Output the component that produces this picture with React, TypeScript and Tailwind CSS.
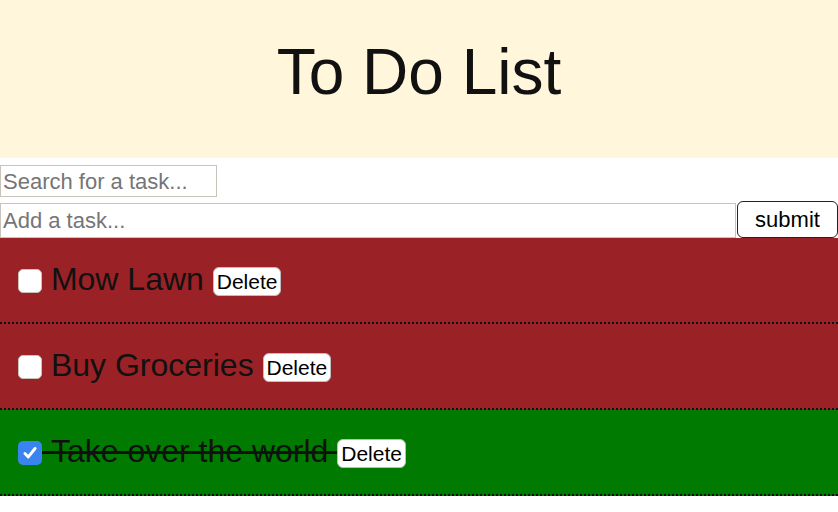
import React from "react";

const tasks = [
  { text: "Mow Lawn", done: false },
  { text: "Buy Groceries", done: false },
  { text: "Take over the world", done: true },
];

function Check({ done }: { done: boolean }) {
  if (done) {
    return (
      <span className="mt-[4px] flex h-6 w-6 shrink-0 items-center justify-center rounded-[5px] bg-[#3a84f0]">
        <svg width="18" height="18" viewBox="0 0 16 16" fill="none">
          <path d="M3.5 8.5 L6.5 11.5 L12.5 4" stroke="white" strokeWidth="2.6" strokeLinecap="round" strokeLinejoin="round" />
        </svg>
      </span>
    );
  }
  return <span className="mt-[4px] block h-6 w-6 shrink-0 rounded-[5px] border border-[#c8c2b8] bg-white" />;
}

export default function App() {
  return (
    <div className="min-h-[512px] bg-white text-black" style={{ fontFamily: '"Liberation Sans", Arial, sans-serif' }}>
      <header className="flex h-[158px] items-center justify-center bg-[#fff6dc] pb-[14px]">
        <h1 className="text-[64px] leading-none font-normal text-[#111]">To Do List</h1>
      </header>
      <div className="pt-[7px]">
        <input
          className="block h-[32px] w-[217px] border border-[#c9c4bb] bg-white px-[2px] text-[22px] text-black outline-none placeholder:text-[#757575]"
          placeholder="Search for a task..."
        />
      </div>
      <div className="mt-[4px] flex items-end">
        <input
          className="block h-[35px] w-[736px] border border-[#c9c4bb] bg-white px-[2px] text-[22px] outline-none placeholder:text-[#757575]"
          placeholder="Add a task..."
        />
        <button className="ml-[1px] h-[37px] flex-1 rounded-[6px] border border-[#222] bg-white text-[22px] leading-none text-black">
          submit
        </button>
      </div>
      <ul>
        {tasks.map((t) => (
          <li
            key={t.text}
            className={`flex h-[86px] items-center border-b-2 border-dotted border-[#111] pb-[2px] pl-[18px] ${t.done ? "bg-[#007a00]" : "bg-[#9a2226]"}`}
          >
            <Check done={t.done} />
            <span className={`whitespace-pre text-[32px] leading-none text-[#111] ${t.done ? "line-through" : ""}`}>
              {"\u00a0" + t.text + "\u00a0"}
            </span>
            <button className="mt-[4px] h-[29px] rounded-[6px] border border-[#bdbdbd] bg-white px-[3px] text-[21px] leading-none text-black">
              Delete
            </button>
          </li>
        ))}
      </ul>
    </div>
  );
}
